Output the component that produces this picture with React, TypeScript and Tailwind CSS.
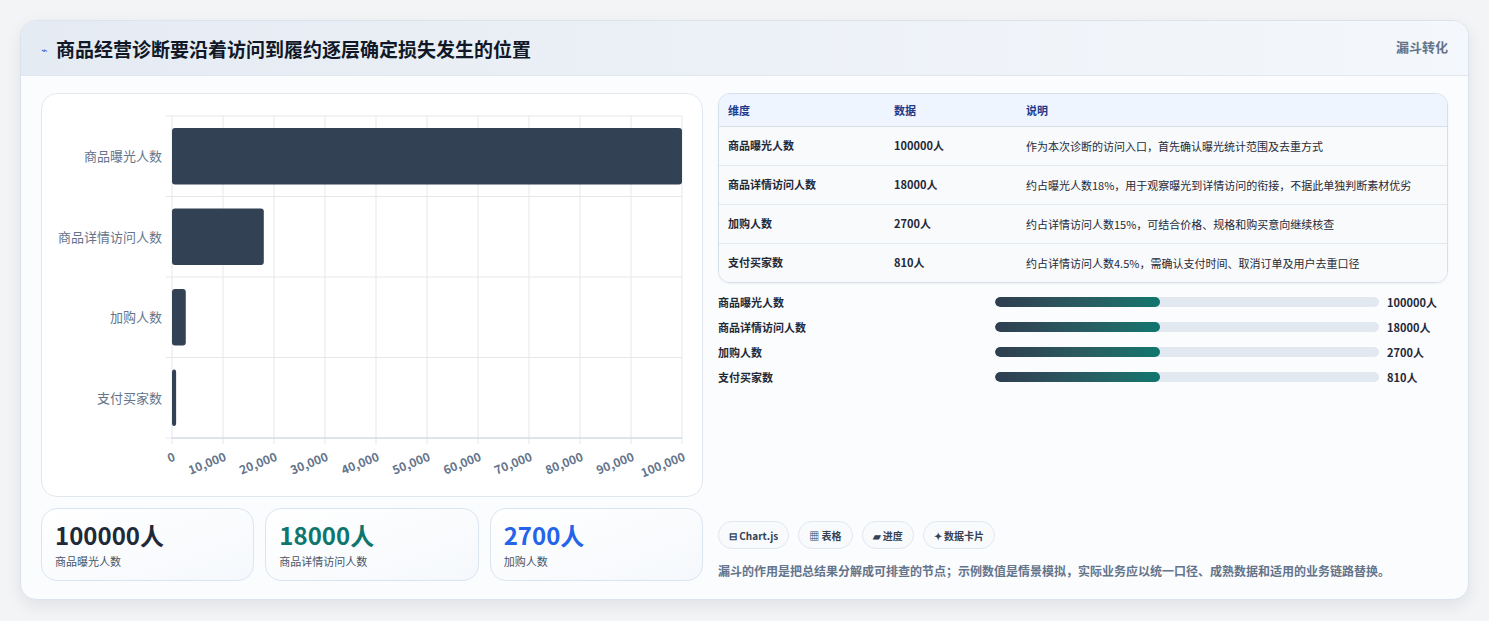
const F = { fontFamily: '"Noto Sans CJK SC", "Noto Sans", sans-serif' };

const rows = [
  ["商品曝光人数", "100000人", "作为本次诊断的访问入口，首先确认曝光统计范围及去重方式"],
  ["商品详情访问人数", "18000人", "约占曝光人数18%，用于观察曝光到详情访问的衔接，不据此单独判断素材优劣"],
  ["加购人数", "2700人", "约占详情访问人数15%，可结合价格、规格和购买意向继续核查"],
  ["支付买家数", "810人", "约占详情访问人数4.5%，需确认支付时间、取消订单及用户去重口径"],
];
const bars = [100000, 18000, 2700, 810];

function Chart() {
  const W = 660, H = 400;
  const x0 = 130, x1 = 640, y0 = 22, y1 = 344;
  const ticks = Array.from({ length: 11 }, (_, i) => i * 10000);
  const rowH = (y1 - y0) / 4;
  return (
    <svg width={W} height={H} className="block">
      {ticks.map((t, i) => {
        const x = x0 + ((x1 - x0) * t) / 100000;
        return (
          <g key={i}>
            <line x1={x} y1={y0} x2={x} y2={y1 + 6} stroke="#e5e7eb" />
            <text x={x + 4} y={y1 + 22} transform={`rotate(-22 ${x + 4} ${y1 + 22})`} textAnchor="end" fontSize="12" fontWeight="700" fill="#64748b" style={F}>
              {t.toLocaleString("en-US")}
            </text>
          </g>
        );
      })}
      {[0, 1, 2, 3, 4].map((i) => (
        <line key={i} x1={x0 - 6} x2={x1} y1={y0 + rowH * i} y2={y0 + rowH * i} stroke="#e5e7eb" />
      ))}
      <line x1={x0} x2={x1} y1={y1} y2={y1} stroke="#cbd5e1" />
      {bars.map((v, i) => {
        const w = ((x1 - x0) * v) / 100000;
        const by = y0 + rowH * i + 12;
        return (
          <g key={i}>
            <rect x={x0} y={by} width={Math.max(w, 3)} height={rowH - 24} rx="3" fill="#334155" />
            <text x={x0 - 10} y={y0 + rowH * i + rowH / 2 + 5} textAnchor="end" fontSize="13" fill="#64748b" style={F}>
              {rows[i][0]}
            </text>
          </g>
        );
      })}
    </svg>
  );
}

export default function App() {
  return (
    <div className="min-h-[621px] bg-[#f3f4f6] pt-5 px-5" style={F}>
      <div className="bg-[#fbfcfe] rounded-2xl border border-[#dbe3ee] shadow-[0_6px_16px_rgba(15,23,42,0.08)] overflow-hidden">
        <div className="h-[55px] bg-gradient-to-r from-[#e5ebf3] to-[#f4f7fb] border-b border-[#dfe7f1] flex items-start justify-between px-5">
          <div className="flex items-center gap-2 mt-[14px]">
            <span className="text-[#3b5bdb] text-[11px]">⌁</span>
            <span className="text-[19px] font-bold text-[#111827]">商品经营诊断要沿着访问到履约逐层确定损失发生的位置</span>
          </div>
          <span className="mt-4 text-[13px] font-semibold text-[#64748b]">漏斗转化</span>
        </div>
        <div className="flex gap-[15px] px-5 pt-[17px] pb-[18px]">
          <div className="w-[662px] flex flex-col gap-[11px]">
            <div className="h-[404px] bg-white border border-[#e2e8f0] rounded-2xl">
              <Chart />
            </div>
            <div className="flex gap-[11px]">
              {[["100000人", "text-[#1f2937]", "商品曝光人数"], ["18000人", "text-[#0f766e]", "商品详情访问人数"], ["2700人", "text-[#2563eb]", "加购人数"]].map(([v, c, l]) => (
                <div key={l} className="flex-1 h-[73px] rounded-2xl border border-[#dbe5f0] bg-gradient-to-br from-white to-[#f5f8fc] px-[13px] pt-[10px]">
                  <div className={`text-[24px] font-bold leading-8 ${c}`}>{v}</div>
                  <div className="text-[11px] text-[#475569] mt-[2px]">{l}</div>
                </div>
              ))}
            </div>
          </div>
          <div className="flex-1 flex flex-col">
            <div className="rounded-xl border border-[#d6e0ec] overflow-hidden text-[11px] text-[#1f2937] shadow-[0_1px_2px_rgba(0,0,0,0.05)]">
              <div className="flex h-[33px] items-center bg-[#eef5ff] border-b border-[#d6e0ec] font-bold text-[#1e3a8a]">
                <div className="w-[175px] pl-[9px]">维度</div>
                <div className="w-[132px]">数据</div>
                <div className="flex-1">说明</div>
              </div>
              {rows.map((r, i) => (
                <div key={i} className={`flex py-[10px] bg-[#f8fafc] ${i < 3 ? "border-b border-[#e2e8f0]" : ""}`}>
                  <div className="w-[175px] pl-[9px] font-semibold">{r[0]}</div>
                  <div className="w-[132px] font-semibold">{r[1]}</div>
                  <div className="flex-1 pr-3 leading-[18px]">{r[2]}</div>
                </div>
              ))}
            </div>
            <div className="flex flex-col gap-[7px] mt-[10px]">
              {rows.map((r) => (
                <div key={r[0]} className="flex items-center h-[18px] text-[11px] font-semibold text-[#1f2937]">
                  <div className="w-[277px]">{r[0]}</div>
                  <div className="w-[384px] h-[10px] rounded-full bg-[#e2e8f0] overflow-hidden">
                    <div className="h-full w-[43%] rounded-full bg-gradient-to-r from-[#2f3e50] to-[#0f766e]" />
                  </div>
                  <div className="ml-2 font-bold">{r[1]}</div>
                </div>
              ))}
            </div>
            <div className="flex-1" />
            <div className="flex gap-[9px] text-[10px] font-semibold text-[#334155]">
              <span className="h-[28px] px-[10px] flex items-center rounded-full border border-[#e2e8f0] bg-[#f8fafc]">⊟ Chart.js</span>
              <span className="h-[28px] px-[10px] flex items-center rounded-full border border-[#e2e8f0] bg-[#f8fafc]">▦ 表格</span>
              <span className="h-[28px] px-[10px] flex items-center rounded-full border border-[#e2e8f0] bg-[#f8fafc]">▰ 进度</span>
              <span className="h-[28px] px-[10px] flex items-center rounded-full border border-[#e2e8f0] bg-[#f8fafc]">✦ 数据卡片</span>
            </div>
            <div className="mt-[12px] text-[12px] font-semibold text-[#64748b] leading-5">
              漏斗的作用是把总结果分解成可排查的节点；示例数值是情景模拟，实际业务应以统一口径、成熟数据和适用的业务链路替换。
            </div>
          </div>
        </div>
      </div>
    </div>
  );
}
